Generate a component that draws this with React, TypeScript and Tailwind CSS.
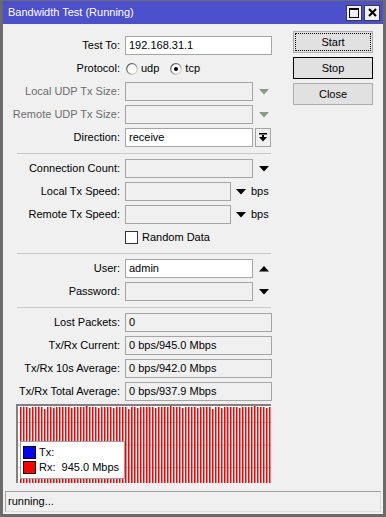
import React from "react";

const FONT = "font-['Liberation_Sans',Arial,sans-serif]";

function Down({ gray }: { gray?: boolean }) {
  return (
    <svg width="10" height="6" viewBox="0 0 10 6">
      <polygon points="0,0 10,0 5,5.5" fill={gray ? "#8b978b" : "#000"} />
    </svg>
  );
}
function Up() {
  return (
    <svg width="10" height="6" viewBox="0 0 10 6">
      <polygon points="0,5.5 10,5.5 5,0" fill="#000" />
    </svg>
  );
}

function Radio({ checked, id }: { checked?: boolean; id: string }) {
  return (
    <svg width="12" height="12" viewBox="0 0 12 12">
      <defs>
        <linearGradient id={id} x1="0" y1="0" x2="1" y2="1">
          <stop offset="0" stopColor="#3c3c3c" />
          <stop offset="0.55" stopColor="#9a9a9a" />
          <stop offset="1" stopColor="#f2f2f2" />
        </linearGradient>
      </defs>
      <circle cx="6" cy="6" r="5.3" fill="#fff" stroke={`url(#${id})`} strokeWidth="1.2" />
      {checked && <circle cx="6" cy="6" r="2" fill="#000" />}
    </svg>
  );
}

function Row({ label, disabled, children }: { label: string; disabled?: boolean; children?: React.ReactNode }) {
  return (
    <div className="flex items-center h-[19px]">
      <div className={`w-[117px] text-right whitespace-nowrap ${disabled ? "text-[#6d6d6d]" : "text-black"}`}>{label}</div>
      <div className="ml-[5px] flex items-center h-[19px]">{children}</div>
    </div>
  );
}

function Field({ w, white, children }: { w: string; white?: boolean; children?: React.ReactNode }) {
  return (
    <div className={`${w} h-[19px] border border-[#a5a5a5] ${white ? "bg-white" : "bg-[#f0f0f0]"} pl-[3px] flex items-center whitespace-nowrap`}>
      {children}
    </div>
  );
}

function Sep() {
  return <div className="ml-[14px] w-[254px] h-px bg-[#c8c8c8] mt-[6px] mb-[5px]" />;
}

function Chart() {
  const bars: React.ReactNode[] = [];
  const tops = [1, 1, 1, 2, 1, 1, 1, 1, 3, 1, 1, 2, 1, 1, 1, 1, 1, 2, 1, 1, 1, 1, 0, 1, 1, 1, 2, 1];
  for (let i = 0; i < 84; i++) {
    const t = tops[i % tops.length];
    bars.push(<rect key={i} x={2 + i * 3} y={t} width={1.5} height={77 - t} fill="#ff0000" />);
  }
  const vgrid: React.ReactNode[] = [];
  for (let x = 5.5; x < 253; x += 15.6) {
    vgrid.push(<line key={x} x1={x} y1={0} x2={x} y2={77} stroke="#c8c8c8" strokeWidth="1" />);
  }
  return (
    <div className="relative ml-[13px] mt-[3px] w-[255px] h-[79px] border-t-2 border-l-2 border-[#808080] bg-white">
      <svg width="253" height="77" viewBox="0 0 253 77" className="block">
        {vgrid}
        {[16.5, 39, 61.5].map((y) => (
          <line key={y} x1={0} y1={y} x2={253} y2={y} stroke="#c8c8c8" strokeWidth="1" />
        ))}
        {bars}
      </svg>
      <div className="absolute left-[2px] top-[35px] w-[105px] h-[38px] bg-white border border-[#a0a0a0] flex flex-col pl-[2px] pt-[4px] gap-[2px]">
        <div className="flex items-center h-[13px]">
          <div className="w-[13px] h-[13px] bg-[#0000ff] border border-black" />
          <span className="ml-[3px]">Tx:</span>
        </div>
        <div className="flex items-center h-[13px]">
          <div className="w-[13px] h-[13px] bg-[#ff0000] border border-black" />
          <span className="ml-[3px] whitespace-pre">Rx:  945.0 Mbps</span>
        </div>
      </div>
    </div>
  );
}

function Btn({ label, kind }: { label: string; kind?: "focus" | "default" }) {
  return (
    <div
      className={`relative w-[80px] h-[22px] bg-[#e1e1e1] border ${kind === "default" ? "border-black" : "border-[#adadad]"} flex items-center justify-center`}
    >
      {kind === "focus" && <div className="absolute inset-[1px] border border-dotted border-black" />}
      <span className="relative">{label}</span>
    </div>
  );
}

export default function App() {
  return (
    <div className={`${FONT} text-[11px] leading-none text-black w-[386px] h-[517px] bg-[#f0f0f0] flex flex-col border-x-[3px] border-b-[3px] border-t border-[#6b6b6b]`}>
      {/* title bar */}
      <div className="h-[23px] bg-[#4d50cc] flex items-center pl-[5px] pr-[3px] text-white text-[11px]">
        <span>Bandwidth Test (Running)</span>
        <div className="ml-auto flex gap-[2px]">
          <div className="w-[16px] h-[16px] bg-[#f0f0f0] border border-[#3a3a3a] flex items-center justify-center">
            <svg width="10" height="10" viewBox="0 0 10 10">
              <rect x="0.5" y="0.5" width="9" height="9" fill="none" stroke="#000" />
              <rect x="0" y="0" width="10" height="2" fill="#000" />
            </svg>
          </div>
          <div className="w-[16px] h-[16px] bg-[#f0f0f0] border border-[#3a3a3a] flex items-center justify-center">
            <svg width="9" height="9" viewBox="0 0 9 9">
              <path d="M1,1 L8,8 M8,1 L1,8" stroke="#000" strokeWidth="2" />
            </svg>
          </div>
        </div>
      </div>

      {/* body */}
      <div className="flex-1 flex">
        <div className="w-[282px] flex flex-col pt-[12px]">
          <div className="flex flex-col gap-[4px]">
            <Row label="Test To:">
              <Field w="w-[147px]" white>192.168.31.1</Field>
            </Row>
            <Row label="Protocol:">
              <div className="flex items-center ml-[1px]">
                <Radio id="r1" />
                <span className="ml-[3px]">udp</span>
                <div className="ml-[11px]">
                  <Radio id="r2" checked />
                </div>
                <span className="ml-[3px]">tcp</span>
              </div>
            </Row>
            <Row label="Local UDP Tx Size:" disabled>
              <Field w="w-[128px]" />
              <div className="ml-[6px]"><Down gray /></div>
            </Row>
            <Row label="Remote UDP Tx Size:" disabled>
              <Field w="w-[128px]" />
              <div className="ml-[6px]"><Down gray /></div>
            </Row>
            <Row label="Direction:">
              <Field w="w-[128px]" white>receive</Field>
              <div className="ml-[2px] w-[16px] h-[19px] border border-[#a5a5a5] bg-[#f0f0f0] flex items-center justify-center">
                <svg width="8" height="9" viewBox="0 0 8 9">
                  <rect x="0" y="0" width="8" height="1.5" fill="#000" />
                  <rect x="3" y="2" width="2" height="3" fill="#000" />
                  <polygon points="0,4 8,4 4,8.5" fill="#000" />
                </svg>
              </div>
            </Row>
          </div>
          <Sep />
          <div className="flex flex-col gap-[4px]">
            <Row label="Connection Count:">
              <Field w="w-[128px]" />
              <div className="ml-[6px]"><Down /></div>
            </Row>
            <Row label="Local Tx Speed:">
              <Field w="w-[106px]" />
              <div className="ml-[5px]"><Down /></div>
              <span className="ml-[5px]">bps</span>
            </Row>
            <Row label="Remote Tx Speed:">
              <Field w="w-[106px]" />
              <div className="ml-[5px]"><Down /></div>
              <span className="ml-[5px]">bps</span>
            </Row>
            <Row label="">
              <div className="w-[13px] h-[13px] bg-white border border-[#333]" />
              <span className="ml-[4px]">Random Data</span>
            </Row>
          </div>
          <Sep />
          <div className="flex flex-col gap-[4px]">
            <Row label="User:">
              <Field w="w-[128px]" white>admin</Field>
              <div className="ml-[6px]"><Up /></div>
            </Row>
            <Row label="Password:">
              <Field w="w-[128px]" />
              <div className="ml-[6px]"><Down /></div>
            </Row>
          </div>
          <Sep />
          <div className="flex flex-col gap-[4px]">
            <Row label="Lost Packets:">
              <Field w="w-[147px]">0</Field>
            </Row>
            <Row label="Tx/Rx Current:">
              <Field w="w-[147px]">0 bps/945.0 Mbps</Field>
            </Row>
            <Row label="Tx/Rx 10s Average:">
              <Field w="w-[147px]">0 bps/942.0 Mbps</Field>
            </Row>
            <Row label="Tx/Rx Total Average:">
              <Field w="w-[147px]">0 bps/937.9 Mbps</Field>
            </Row>
          </div>
          <Chart />
        </div>
        <div className="flex flex-col gap-[4px] pt-[7px] pl-[8px]">
          <Btn label="Start" kind="focus" />
          <Btn label="Stop" kind="default" />
          <Btn label="Close" />
        </div>
      </div>

      {/* status bar */}
      <div className="ml-[2px] mr-[2px] mb-[2px] h-[21px] border border-t-[#a0a0a0] border-l-[#a0a0a0] border-b-[#dcdcdc] border-r-[#dcdcdc] flex items-center pl-[2px]">
        running...
      </div>
    </div>
  );
}
